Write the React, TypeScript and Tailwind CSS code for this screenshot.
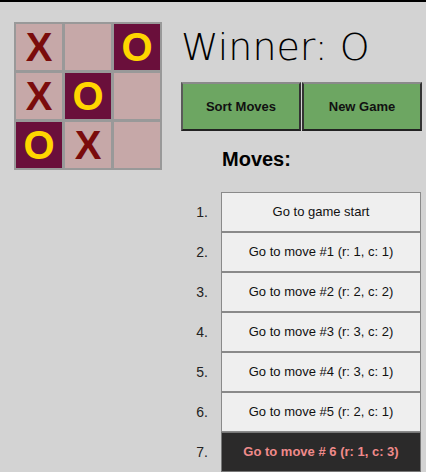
import React from 'react';

type Cell = 'X' | 'O' | null;

const BOARD: Cell[] = ['X', null, 'O', 'X', 'O', null, 'O', 'X', null];

const MOVES = [
    'Go to game start',
    'Go to move #1 (r: 1, c: 1)',
    'Go to move #2 (r: 2, c: 2)',
    'Go to move #3 (r: 3, c: 2)',
    'Go to move #4 (r: 3, c: 1)',
    'Go to move #5 (r: 2, c: 1)',
    'Go to move # 6 (r: 1, c: 3)',
];

function Square({ value }: { value: Cell }) {
    const dark = value === 'O';
    return (
        <div
            className={`w-[46px] h-[46px] flex items-center justify-center text-[40px] font-bold leading-none ${
                dark ? 'bg-[#6a0f3b] text-[#ffd600]' : 'bg-[#c6a8a8] text-[#7a0c0c]'
            }`}
        >
            {value}
        </div>
    );
}

export default function App() {
    const current = MOVES.length - 1;
    return (
        <div className="h-[472px] w-[426px] overflow-hidden bg-[#d3d3d3] font-['Liberation_Sans',Arial,sans-serif] text-black">
            <div className="h-[2px] bg-black" />

            <div className="flex pl-[14px] pt-[20px]">
                {/* Board */}
                <div className="grid grid-cols-3 gap-[3px] p-[2px] bg-[#999] self-start">
                    {BOARD.map((v, i) => (
                        <Square key={i} value={v} />
                    ))}
                </div>

                {/* Game info */}
                <div className="ml-[19px] pt-[2px] flex flex-col">
                    <div className="font-['DejaVu_Sans',sans-serif] text-[38px] leading-[47px] font-extralight text-black">
                        Winner: O
                    </div>

                    <div className="mt-[11px] flex gap-[1px]">
                        <button className="w-[120px] h-[49px] bg-[#6da662] border-2 border-t-[#8a8a8a] border-l-[#5a5a5a] border-b-[#222] border-r-[#333] text-[13px] font-bold text-[#111]">
                            Sort Moves
                        </button>
                        <button className="w-[120px] h-[49px] bg-[#6da662] border-2 border-t-[#8a8a8a] border-l-[#333] border-b-[#222] border-r-[#333] text-[13px] font-bold text-[#111]">
                            New Game
                        </button>
                    </div>

                    <div className="mt-[17px] pl-[41px] text-[20px] leading-[23px] font-bold">Moves:</div>

                    <ol className="mt-[21px] flex flex-col">
                        {MOVES.map((label, i) => (
                            <li key={i} className="flex items-center">
                                <span className="w-[27px] text-right text-[14px] text-[#222]">{i + 1}.</span>
                                <button
                                    className={`ml-[13px] w-[200px] h-[40px] border text-[13px] ${
                                        i === current
                                            ? 'bg-[#2b2a2a] border-[#777] text-[#f08a8a] font-bold'
                                            : 'bg-[#efefef] border-[#8a8a8a] text-[#111]'
                                    }`}
                                >
                                    {label}
                                </button>
                            </li>
                        ))}
                    </ol>
                </div>
            </div>
        </div>
    );
}
